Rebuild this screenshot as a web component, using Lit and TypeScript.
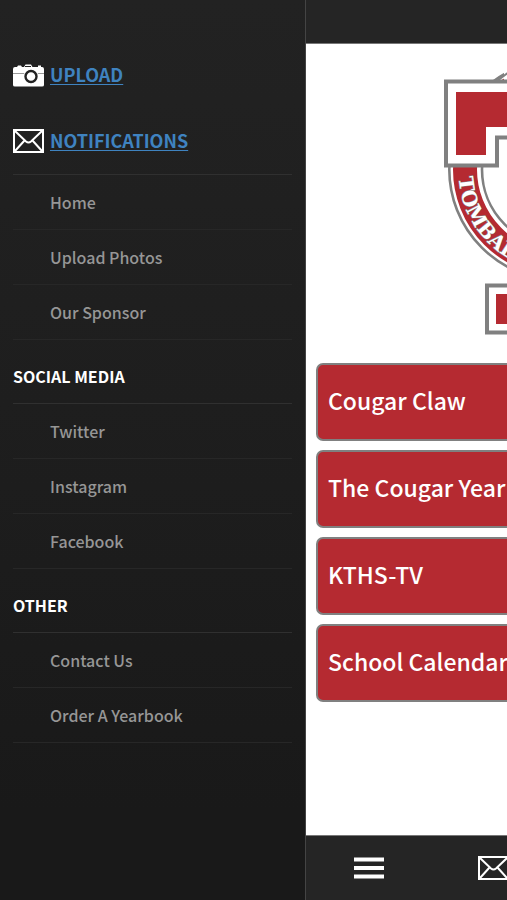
import { LitElement, html, css, svg } from "lit";
import { customElement } from "lit/decorators.js";

const envelope = html`<svg class="icon" viewBox="0 0 31 24" width="31" height="24" aria-hidden="true">
  <rect x="1" y="1" width="29" height="22" fill="none" stroke="#fff" stroke-width="2" />
  <path d="M2 2 L13 12.5 Q15.5 14.5 18 12.5 L29 2 M2 22 L11.5 11.5 M29 22 L19.5 11.5" fill="none" stroke="#fff" stroke-width="2" />
</svg>`;

const camera = html`<svg class="icon" viewBox="0 0 31 23" width="31" height="23" aria-hidden="true">
  <path d="M2 3 H4 L5 1.5 H8 L9 3 H11 L12.5 0.5 H18 L19.5 3 H25 V1.5 H28 V3 H29 Q31 3 31 5 V21 Q31 22.5 29 22.5 H2 Q0 22.5 0 21 V5 Q0 3 2 3Z" fill="#fff" />
  <path d="M0 9.5 H31" stroke="#999" stroke-width="1" />
  <path d="M12 2.5 H18" stroke="#222" stroke-width="1" />
  <circle cx="18" cy="12.5" r="7.5" fill="#fff" />
  <circle cx="18" cy="12.5" r="5.5" fill="#fff" stroke="#222" stroke-width="2.4" />
</svg>`;

const bars = html`<svg class="icon" viewBox="0 0 30 22" width="30" height="22" aria-hidden="true">
  <path d="M0 2.5 H30 M0 11 H30 M0 19.5 H30" stroke="#fff" stroke-width="4" />
</svg>`;

const crest = svg`
  <g fill="none">
    <circle cx="115.5" cy="97.5" r="94.5" stroke="#b52a31" stroke-width="24" />
    <circle cx="115.5" cy="97.5" r="110.2" stroke="#808080" stroke-width="2.6" />
    <circle cx="115.5" cy="97.5" r="77.5" stroke="#808080" stroke-width="2.6" />
  </g>
  <path id="arc" d="M14.7 105.5 A101 101 0 0 0 216.3 105.5" fill="none" />
  <text class="crest-text"><textPath href="#arc">TOMBALL</textPath></text>
  <rect x="60" y="0" width="111" height="97" fill="#fff" />
  <path d="M53 9 L65 0" stroke="#808080" stroke-width="2" />
  <path d="M2 9.5 H229 V93.5 H178 V65.5 H150 V213.5 H188 V260.5 H43 V213.5 H81 V65.5 H53 V93.5 H2Z" fill="#fff" stroke="#808080" stroke-width="4" />
  <path d="M12 20 H219 V83 H189 V55 H140 V222 H178 V252 H52 V222 H91 V55 H42 V83 H12Z" fill="#b52a31" />`;

const groups = [
  { title: "", items: ["Home", "Upload Photos", "Our Sponsor"] },
  { title: "SOCIAL MEDIA", items: ["Twitter", "Instagram", "Facebook"] },
  { title: "OTHER", items: ["Contact Us", "Order A Yearbook"] },
];

const pages = ["Cougar Claw", "The Cougar Year", "KTHS-TV", "School Calendar"];

@customElement("app-root")
export class AppRoot extends LitElement {
  static styles = css`
    :host {
      display: flex;
      min-height: 100vh;
      overflow: hidden;
      font-family: "Noto Sans CJK SC", "Noto Sans", sans-serif;
      background: #222;
    }
    * { box-sizing: border-box; }
    ul { list-style: none; margin: 0; padding: 0; }
    .icon { display: block; flex: none; }
    .drawer {
      flex: 0 0 306px;
      padding: 42px 13px 0;
      background: linear-gradient(#222, #1e1e1e 45%, #191919 90%);
      border-right: 1px solid #444;
    }
    .action {
      display: flex;
      align-items: center;
      gap: 6px;
      height: 66px;
      color: #3f83c0;
      font-size: 18px;
      font-weight: 700;
      line-height: 24px;
      text-underline-offset: 2px;
    }
    .action span { padding-bottom: 2px; }
    .list { border-top: 1px solid #303030; }
    .item {
      display: flex;
      align-items: center;
      height: 55px;
      padding-left: 37px;
      border-bottom: 1px solid #272727;
      color: #969696;
      font-size: 16px;
      font-weight: 500;
      line-height: 24px;
      text-decoration: none;
    }
    .title {
      display: flex;
      align-items: center;
      height: 63px;
      margin: 0;
      padding-top: 8px;
      color: #fff;
      font-size: 16px;
      font-weight: 700;
      line-height: 24px;
    }
    .page {
      flex: 0 0 100%;
      display: flex;
      flex-direction: column;
      background: #fff;
    }
    .top { height: 44px; background: #252525; border-bottom: 1px solid #777; }
    .content {
      flex: 1;
      display: flex;
      flex-direction: column;
      align-items: center;
      padding: 28px 10px;
    }
    .crest { display: block; }
    .crest-text {
      font: bold 20px "DejaVu Serif", serif;
      fill: #fff;
      stroke: #808080;
      stroke-width: 1px;
      paint-order: stroke;
    }
    .pages {
      display: flex;
      flex-direction: column;
      gap: 9px;
      width: 100%;
      margin-top: 28px;
    }
    .tile {
      width: 100%;
      height: 78px;
      padding: 0 10px 5px;
      border: 2px solid #808080;
      border-radius: 7px;
      background: #b52a31;
      color: #fff;
      font-family: inherit;
      font-size: 23px;
      font-weight: 500;
      line-height: 32px;
      text-align: left;
    }
    .tabs {
      display: flex;
      height: 65px;
      padding-right: 6px;
      background: #252525;
      border-top: 1px solid #777;
    }
    .tab {
      flex: 0 0 25%;
      display: grid;
      place-items: center;
      padding: 0;
      border: 0;
      background: none;
    }
  `;

  render() {
    return html`
      <nav class="drawer" aria-label="Menu">
        <a class="action" href="#upload">${camera}<span>UPLOAD</span></a>
        <a class="action" href="#notifications">${envelope}<span>NOTIFICATIONS</span></a>
        ${groups.map(
          (g) => html`
            ${g.title ? html`<h2 class="title">${g.title}</h2>` : ""}
            <ul class="list">
              ${g.items.map((i) => html`<li><a class="item" href="#">${i}</a></li>`)}
            </ul>
          `,
        )}
      </nav>
      <main class="page">
        <header class="top"></header>
        <section class="content">
          <svg class="crest" viewBox="0 0 231 263" width="231" height="263" role="img" aria-label="Tomball crest">${crest}</svg>
          <div class="pages">${pages.map((p) => html`<button class="tile">${p}</button>`)}</div>
        </section>
        <footer class="tabs">
          <button class="tab" aria-label="Menu">${bars}</button>
          <button class="tab" aria-label="Notifications">${envelope}</button>
        </footer>
      </main>
    `;
  }
}
